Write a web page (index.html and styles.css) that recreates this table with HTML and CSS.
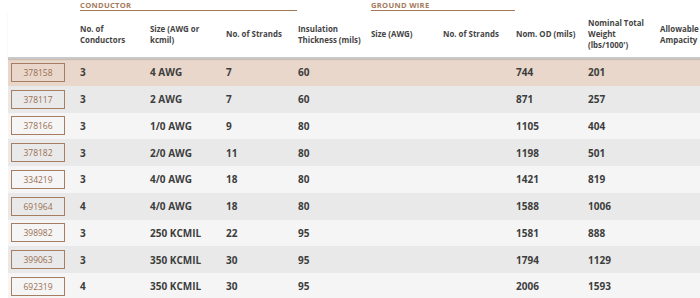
FILE: index.html
```html
<!DOCTYPE html>
<html lang="en">
<head>
<meta charset="utf-8">
<title>Cable specs</title>
<link rel="stylesheet" href="styles.css">
</head>
<body>
<div class="spec">
  <div class="row groups">
    <div class="cell"></div>
    <div class="cell span3"><span class="group g-cond">CONDUCTOR</span></div>
    <div class="cell"></div>
    <div class="cell span2"><span class="group g-ground">GROUND WIRE</span></div>
  </div>
  <div class="row head">
    <div class="cell"></div>
    <div class="cell">No. of<br>Conductors</div>
    <div class="cell">Size (AWG or<br>kcmil)</div>
    <div class="cell">No. of Strands</div>
    <div class="cell">Insulation<br>Thickness (mils)</div>
    <div class="cell">Size (AWG)</div>
    <div class="cell">No. of Strands</div>
    <div class="cell">Nom. OD (mils)</div>
    <div class="cell">Nominal Total<br>Weight<br>(lbs/1000')</div>
    <div class="cell">Allowable<br>Ampacity</div>
  </div>
  <div class="row data active">
    <div class="cell btn-cell"><span class="part">378158</span></div>
    <div class="cell">3</div><div class="cell">4 AWG</div><div class="cell">7</div><div class="cell">60</div>
    <div class="cell"></div><div class="cell"></div><div class="cell">744</div><div class="cell">201</div><div class="cell"></div>
  </div>
  <div class="row data even">
    <div class="cell btn-cell"><span class="part">378117</span></div>
    <div class="cell">3</div><div class="cell">2 AWG</div><div class="cell">7</div><div class="cell">60</div>
    <div class="cell"></div><div class="cell"></div><div class="cell">871</div><div class="cell">257</div><div class="cell"></div>
  </div>
  <div class="row data odd">
    <div class="cell btn-cell"><span class="part">378166</span></div>
    <div class="cell">3</div><div class="cell">1/0 AWG</div><div class="cell">9</div><div class="cell">80</div>
    <div class="cell"></div><div class="cell"></div><div class="cell">1105</div><div class="cell">404</div><div class="cell"></div>
  </div>
  <div class="row data even">
    <div class="cell btn-cell"><span class="part">378182</span></div>
    <div class="cell">3</div><div class="cell">2/0 AWG</div><div class="cell">11</div><div class="cell">80</div>
    <div class="cell"></div><div class="cell"></div><div class="cell">1198</div><div class="cell">501</div><div class="cell"></div>
  </div>
  <div class="row data odd">
    <div class="cell btn-cell"><span class="part">334219</span></div>
    <div class="cell">3</div><div class="cell">4/0 AWG</div><div class="cell">18</div><div class="cell">80</div>
    <div class="cell"></div><div class="cell"></div><div class="cell">1421</div><div class="cell">819</div><div class="cell"></div>
  </div>
  <div class="row data even">
    <div class="cell btn-cell"><span class="part">691964</span></div>
    <div class="cell">4</div><div class="cell">4/0 AWG</div><div class="cell">18</div><div class="cell">80</div>
    <div class="cell"></div><div class="cell"></div><div class="cell">1588</div><div class="cell">1006</div><div class="cell"></div>
  </div>
  <div class="row data odd">
    <div class="cell btn-cell"><span class="part">398982</span></div>
    <div class="cell">3</div><div class="cell">250 KCMIL</div><div class="cell">22</div><div class="cell">95</div>
    <div class="cell"></div><div class="cell"></div><div class="cell">1581</div><div class="cell">888</div><div class="cell"></div>
  </div>
  <div class="row data even">
    <div class="cell btn-cell"><span class="part">399063</span></div>
    <div class="cell">3</div><div class="cell">350 KCMIL</div><div class="cell">30</div><div class="cell">95</div>
    <div class="cell"></div><div class="cell"></div><div class="cell">1794</div><div class="cell">1129</div><div class="cell"></div>
  </div>
  <div class="row data odd">
    <div class="cell btn-cell"><span class="part">692319</span></div>
    <div class="cell">4</div><div class="cell">350 KCMIL</div><div class="cell">30</div><div class="cell">95</div>
    <div class="cell"></div><div class="cell"></div><div class="cell">2006</div><div class="cell">1593</div><div class="cell"></div>
  </div>
</div>
</body>
</html>
```

FILE: styles.css
```css
html, body {
  margin: 0;
  padding: 0;
  background: #ffffff;
  overflow: hidden;
}
body {
  font-family: "Open Sans", "Liberation Sans", sans-serif;
  color: #3f3f3f;
}
.spec {
  margin-left: 8px;
  width: 720px;
}
.row {
  display: grid;
  grid-template-columns: 64px 70px 76px 72px 73px 72px 73px 72px 72px 76px;
  align-items: center;
}
.cell {
  padding-left: 8px;
  white-space: nowrap;
}
.span3 { grid-column: span 3; }
.span2 { grid-column: span 2; }
.groups {
  height: 12px;
  align-items: start;
}
.group {
  display: block;
  font-size: 7.6px;
  font-weight: 700;
  letter-spacing: 0.3px;
  line-height: 10px;
  color: #a47a5c;
  border-bottom: 1px solid #a47a5c;
}
.g-cond { width: 217px; }
.g-ground { width: 144px; }
.head {
  height: 45px;
  font-size: 7.9px;
  font-weight: 700;
  line-height: 11px;
  color: #444444;
  border-bottom: 2px solid #c9c9c9;
  box-shadow: 0 1px 1px rgba(0, 0, 0, 0.12);
  position: relative;
}
.data {
  height: 26.75px;
  font-size: 10px;
  font-weight: 700;
  color: #3d3d3d;
}
.active { background: #e8d7ca; }
.even { background: #e9e9e9; }
.odd { background: #f5f5f5; }
.btn-cell {
  padding-left: 3px;
}
.part {
  display: flex;
  align-items: center;
  justify-content: center;
  width: 52px;
  height: 17px;
  border: 1px solid #a57d62;
  font-size: 8.5px;
  font-weight: 400;
  color: #9a6f52;
}
```
